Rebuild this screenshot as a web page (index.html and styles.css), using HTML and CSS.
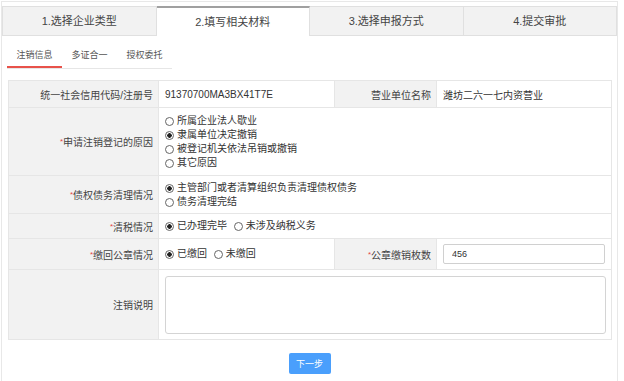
FILE: index.html
```html
<!DOCTYPE html>
<html lang="zh-CN">

<head>
    <meta charset="UTF-8">
    <meta name="viewport" content="width=device-width, initial-scale=1.0">
    <title>注销登记</title>
    <link rel="stylesheet" href="styles.css">
</head>

<body>
    <div class="page">
        <div class="steps">
            <div class="step">1.选择企业类型</div>
            <div class="step active">2.填写相关材料</div>
            <div class="step">3.选择申报方式</div>
            <div class="step">4.提交审批</div>
        </div>

        <div class="sub-tabs">
            <span class="sub-tab current">注销信息</span>
            <span class="sub-tab">多证合一</span>
            <span class="sub-tab">授权委托</span>
        </div>

        <table class="form-table">
            <colgroup>
                <col class="col-label">
                <col class="col-value">
                <col class="col-label2">
                <col class="col-value2">
            </colgroup>
            <tr class="row-code">
                <td class="label">统一社会信用代码/注册号</td>
                <td class="value">91370700MA3BX41T7E</td>
                <td class="label">营业单位名称</td>
                <td class="value">潍坊二六一七内资营业</td>
            </tr>
            <tr class="row-reason">
                <td class="label"><i class="req">*</i>申请注销登记的原因</td>
                <td class="value" colspan="3">
                    <label class="opt block"><input type="radio" name="reason">所属企业法人歇业</label>
                    <label class="opt block"><input type="radio" name="reason" checked>隶属单位决定撤销</label>
                    <label class="opt block"><input type="radio" name="reason">被登记机关依法吊销或撤销</label>
                    <label class="opt block"><input type="radio" name="reason">其它原因</label>
                </td>
            </tr>
            <tr class="row-debt">
                <td class="label"><i class="req">*</i>债权债务清理情况</td>
                <td class="value" colspan="3">
                    <label class="opt block"><input type="radio" name="debt" checked>主管部门或者清算组织负责清理债权债务</label>
                    <label class="opt block"><input type="radio" name="debt">债务清理完结</label>
                </td>
            </tr>
            <tr class="row-tax">
                <td class="label"><i class="req">*</i>清税情况</td>
                <td class="value" colspan="3">
                    <label class="opt"><input type="radio" name="tax" checked>已办理完毕</label>
                    <label class="opt"><input type="radio" name="tax">未涉及纳税义务</label>
                </td>
            </tr>
            <tr class="row-seal">
                <td class="label"><i class="req">*</i>缴回公章情况</td>
                <td class="value">
                    <label class="opt"><input type="radio" name="seal" checked>已缴回</label>
                    <label class="opt"><input type="radio" name="seal">未缴回</label>
                </td>
                <td class="label"><i class="req">*</i>公章缴销枚数</td>
                <td class="value"><input class="text-input" type="text" value="456"></td>
            </tr>
            <tr class="row-note">
                <td class="label">注销说明</td>
                <td class="value" colspan="3"><textarea class="note"></textarea></td>
            </tr>
        </table>

        <div class="actions">
            <button class="btn-next" type="button">下一步</button>
        </div>
    </div>
</body>

</html>
```

FILE: styles.css
```css
* {
    box-sizing: border-box;
}

body {
    margin: 0;
    font-family: "Liberation Sans", "Noto Sans CJK SC", sans-serif;
    color: #333333;
    background-color: #ffffff;
}

.page {
    margin: 1px 6px 0 1px;
    height: 390px;
    padding-top: 4px;
    border: 1px solid #e8e8e8;
    border-bottom: none;
}

/* Step tabs */
.steps {
    display: flex;
}

.step {
    flex: 1;
    height: 30px;
    line-height: 28px;
    text-align: center;
    font-size: 11px;
    color: #444;
    background-color: #f2f2f2;
    border: 1px solid #e0e0e0;
    border-left: none;
}

.step:first-child {
    border-left: 1px solid #e0e0e0;
}

.step.active {
    background-color: #ffffff;
    border-top: 2px solid #a0a0a0;
    border-bottom: none;
    line-height: 28px;
}

/* Sub tabs */
.sub-tabs {
    display: flex;
    width: 165px;
    margin: 8px 0 0 5px;
    border-bottom: 1px solid #e6e6e6;
}

.sub-tab {
    width: 55px;
    height: 24px;
    line-height: 22px;
    text-align: center;
    font-size: 9px;
    color: #555;
}

.sub-tab.current {
    border-bottom: 2px solid #e8524a;
}

/* Form table */
.form-table {
    width: 603px;
    margin: 11px 0 0 6px;
    border-collapse: collapse;
    table-layout: fixed;
    font-size: 10px;
}

.col-label {
    width: 150px;
}

.col-value {
    width: 176px;
}

.col-label2 {
    width: 102px;
}

.col-value2 {
    width: 175px;
}

.form-table td {
    border: 1px solid #e6e6e6;
    padding: 0 6px;
    vertical-align: middle;
}

.form-table .label {
    background-color: #f2f2f2;
    text-align: right;
    padding-right: 5px;
    color: #444;
}

.form-table .value {
    background-color: #ffffff;
    color: #333;
}

.req {
    font-style: normal;
    color: #e64545;
    font-size: 8px;
    vertical-align: 2px;
}

.row-code {
    height: 27px;
}

.row-reason {
    height: 68px;
}

.row-debt {
    height: 38px;
}

.row-tax {
    height: 25px;
}

.row-seal {
    height: 31px;
}

.row-note {
    height: 70px;
}

.opt {
    display: inline-flex;
    align-items: center;
    line-height: 14px;
    margin-right: 4px;
}

.opt.block {
    display: flex;
}

.opt input {
    appearance: none;
    -webkit-appearance: none;
    width: 9px;
    height: 9px;
    margin: 1px 3px 0 0;
    border: 1px solid #666;
    border-radius: 50%;
    background-color: #fff;
}

.opt input:checked {
    background: radial-gradient(circle, #222 0, #222 2px, #fff 2.5px);
}

.text-input {
    display: block;
    width: 100%;
    height: 20px;
    padding: 0 8px;
    border: 1px solid #d0d0d0;
    border-radius: 2px;
    font-family: inherit;
    font-size: 9px;
    color: #333;
}

.note {
    display: block;
    width: 441px;
    height: 58px;
    border: 1px solid #d4d4d4;
    border-radius: 3px;
    resize: none;
}

/* Action button */
.actions {
    text-align: center;
    margin-top: 13px;
}

.btn-next {
    width: 42px;
    height: 21px;
    border: none;
    border-radius: 2px;
    background-color: #4a9ffc;
    color: #ffffff;
    font-family: inherit;
    font-size: 9px;
    padding: 0;
}
```
